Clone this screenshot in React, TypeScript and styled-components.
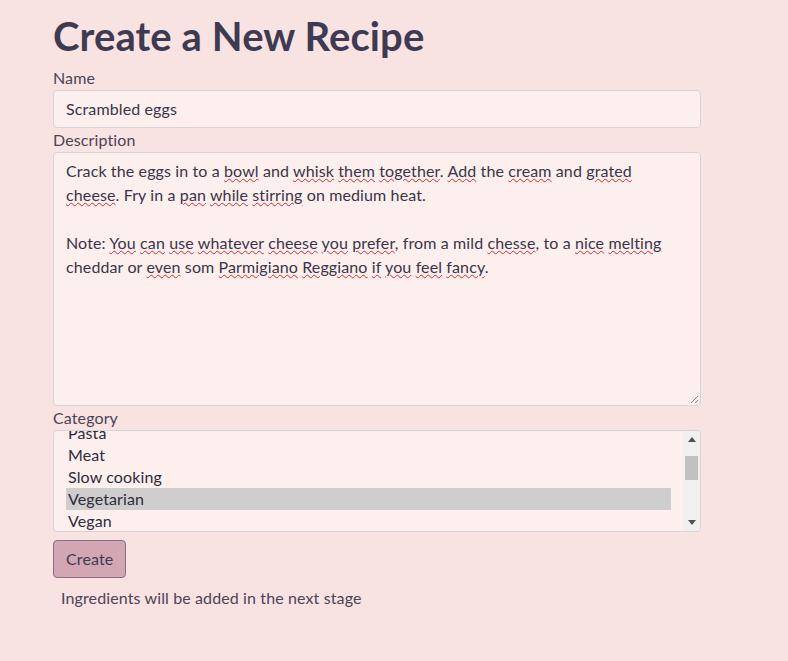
import React, { useEffect, useRef } from 'react';
import styled, { createGlobalStyle } from 'styled-components';

const GlobalStyle = createGlobalStyle`
  html, body {
    margin: 0;
    min-height: 100%;
    background: #f9e2e2;
  }
  body {
    font-family: Lato, 'Open Sans', sans-serif;
    color: #3e3a52;
    letter-spacing: 0.12px;
  }
`;

const Page = styled.div`
  padding: 12px 0 40px 53px;
  width: 648px;
`;

const Title = styled.h1`
  font-size: 40px;
  line-height: 48px;
  font-weight: 700;
  letter-spacing: 0.1px;
  margin: 0 0 6px;
  color: #3e3a52;
`;

const Label = styled.label`
  display: block;
  font-size: 16px;
  line-height: 24px;
  color: #4b4458;
`;

const Field = styled.div`
  box-sizing: border-box;
  background: #fcefee;
  border: 1px solid #d6d3d9;
  border-radius: 4px;
  font-size: 16px;
  line-height: 24px;
  color: #3a3548;
`;

const TextInput = styled(Field)`
  height: 38px;
  padding: 6px 12px;
`;

const TextArea = styled(Field)`
  position: relative;
  height: 254px;
  padding: 6px 12px;
  white-space: pre-wrap;
`;

const Misspelled = styled.span`
  text-decoration: underline wavy #e2252c;
  text-decoration-thickness: 1px;
  text-underline-offset: 1px;
`;

const ResizeGrip = styled.svg`
  position: absolute;
  right: 1px;
  bottom: 1px;
`;

const ListBox = styled(Field)`
  height: 102px;
  display: flex;
  overflow: hidden;
`;

const Options = styled.div`
  flex: 1;
  overflow: hidden;
  padding: 0 12px;
`;

const Option = styled.div<{ $selected?: boolean }>`
  line-height: 22px;
  padding: 0 2px;
  background: ${(p) => (p.$selected ? '#cecece' : 'transparent')};
  color: #2f2b3b;
`;

const Scrollbar = styled.div`
  width: 17px;
  background: #f0f0f0;
  display: flex;
  flex-direction: column;
  align-items: center;
`;

const Arrow = styled.div`
  height: 17px;
  display: flex;
  align-items: center;
  justify-content: center;
`;

const Track = styled.div`
  flex: 1;
  width: 100%;
  display: flex;
  flex-direction: column;
  align-items: center;
  padding-top: 8px;
`;

const Thumb = styled.div`
  width: 13px;
  height: 24px;
  background: #c1c1c1;
`;

const CreateButton = styled.button`
  margin-top: 8px;
  height: 38px;
  padding: 0 12px 1px;
  background: #d3a6b3;
  border: 1px solid #8e6c86;
  border-radius: 4px;
  font-family: inherit;
  font-size: 16px;
  letter-spacing: inherit;
  color: #3e3a52;
  cursor: pointer;
`;

const Hint = styled.p`
  margin: 8px 0 0 8px;
  font-size: 16px;
  line-height: 24px;
  color: #4b4458;
`;

const categories = ['Pasta', 'Meat', 'Slow cooking', 'Vegetarian', 'Vegan'];

const W = Misspelled;

export default function App() {
  const listRef = useRef<HTMLDivElement>(null);

  useEffect(() => {
    if (listRef.current) listRef.current.scrollTop = 9;
  }, []);

  return (
    <Page>
      <GlobalStyle />
      <Title>Create a New Recipe</Title>

      <Label>Name</Label>
      <TextInput>Scrambled eggs</TextInput>

      <Label>Description</Label>
      <TextArea>
        Crack the eggs in to a <W>bowl</W> and <W>whisk</W> <W>them</W>{' '}
        <W>together</W>. <W>Add</W> the <W>cream</W> and <W>grated</W>
        {'\n'}
        <W>cheese</W>. Fry in a <W>pan</W> <W>while</W> <W>stirring</W> on medium heat.
        {'\n\n'}
        Note: <W>You</W> <W>can</W> <W>use</W> <W>whatever</W> <W>cheese</W>{' '}
        <W>you</W> <W>prefer</W>, from a mild <W>chesse</W>, to a <W>nice</W>{' '}
        <W>melting</W>
        {'\n'}
        cheddar or <W>even</W> som <W>Parmigiano</W> <W>Reggiano</W> <W>if</W>{' '}
        <W>you</W> <W>feel</W> <W>fancy</W>.
        <ResizeGrip width="10" height="10" viewBox="0 0 10 10">
          <path d="M9 2 L2 9 M9 6 L6 9" stroke="#8a8a8a" strokeWidth="1" />
        </ResizeGrip>
      </TextArea>

      <Label>Category</Label>
      <ListBox>
        <Options ref={listRef}>
          {categories.map((c) => (
            <Option key={c} $selected={c === 'Vegetarian'}>
              {c}
            </Option>
          ))}
        </Options>
        <Scrollbar>
          <Arrow>
            <svg width="8" height="5" viewBox="0 0 8 5">
              <path d="M4 0 L8 5 L0 5 Z" fill="#505050" />
            </svg>
          </Arrow>
          <Track>
            <Thumb />
          </Track>
          <Arrow>
            <svg width="8" height="5" viewBox="0 0 8 5">
              <path d="M0 0 L8 0 L4 5 Z" fill="#505050" />
            </svg>
          </Arrow>
        </Scrollbar>
      </ListBox>

      <CreateButton>Create</CreateButton>
      <Hint>Ingredients will be added in the next stage</Hint>
    </Page>
  );
}
